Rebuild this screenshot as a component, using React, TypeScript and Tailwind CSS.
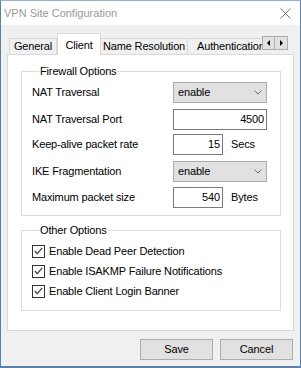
import { ReactNode } from 'react'

const FONT = { fontFamily: '"Liberation Sans", Arial, sans-serif' }

function Chevron() {
  return (
    <svg width="8" height="5" viewBox="0 0 8 5" className="mr-[4px]">
      <path d="M0.5 0.5 L4 4 L7.5 0.5" fill="none" stroke="#6e6e6e" strokeWidth="1" />
    </svg>
  )
}

function Select({ value }: { value: string }) {
  return (
    <div className="flex h-[21px] w-[94px] items-center justify-between border border-[#adadad] bg-[#e1e1e1] pl-[4px]">
      <span>{value}</span>
      <Chevron />
    </div>
  )
}

function Input({ value, width }: { value: string; width: string }) {
  return (
    <div className={`flex h-[21px] items-center justify-end border border-[#7a7a7a] bg-white pr-[2px] ${width}`}>
      {value}
    </div>
  )
}

function Row({ label, children, className = '' }: { label: string; children: ReactNode; className?: string }) {
  return (
    <div className={`flex items-center ${className}`}>
      <span className="w-[141px]">{label}</span>
      {children}
    </div>
  )
}

function Check({ label }: { label: string }) {
  return (
    <div className="flex h-[20px] items-center gap-[4px]">
      <div className="flex h-[13px] w-[13px] items-center justify-center border border-[#333] bg-white">
        <svg width="9" height="8" viewBox="0 0 9 8">
          <path d="M0.8 4 L3.3 6.6 L8.2 0.8" fill="none" stroke="#333" strokeWidth="1.1" />
        </svg>
      </div>
      <span>{label}</span>
    </div>
  )
}

export default function App() {
  return (
    <div
      className="flex h-[368px] w-[301px] flex-col border-x border-t border-b-2 border-x-[#5b7fa6] border-t-[#8fb0d0] border-b-[#5b7fa6] text-[11px] tracking-[-0.15px] text-black"
      style={FONT}
    >
      {/* Title bar */}
      <div className="flex h-[24px] shrink-0 items-center justify-between bg-white pl-[3px] pr-[9px]">
        <span className="text-[11px] tracking-normal text-[#999]">VPN Site Configuration</span>
        <svg width="11" height="11" viewBox="0 0 11 11">
          <path d="M0.5 0.5 L10.5 10.5 M10.5 0.5 L0.5 10.5" stroke="#777" strokeWidth="1" />
        </svg>
      </div>

      <div className="flex flex-1 flex-col bg-[#f0f0f0] px-[6px]">
        {/* Tabs */}
        <div className="flex h-[29px] shrink-0 items-end pl-[2px]">
          <div className="flex h-[16px] w-[48px] items-center justify-center border border-b-0 border-[#d9d9d9] bg-[#f0f0f0]">
            General
          </div>
          <div className="relative z-10 -mb-px flex h-[22px] w-[44px] items-start justify-center border border-b-0 border-[#d9d9d9] bg-white pt-[3px]">
            Client
          </div>
          <div className="flex h-[16px] w-[87px] items-center justify-center border border-b-0 border-l-0 border-[#d9d9d9] bg-[#f0f0f0]">
            Name Resolution
          </div>
          <div className="flex h-[16px] w-[74px] items-center overflow-hidden border-t border-[#d9d9d9] bg-[#f0f0f0] pl-[9px] whitespace-nowrap">
            Authentication
          </div>
          <div className="mb-[4px] flex self-end">
            <div className="flex h-[14px] w-[13px] items-center justify-center border border-[#adadad] bg-[#e1e1e1]">
              <svg width="4" height="6" viewBox="0 0 4 6">
                <path d="M3 0 L0 3 L3 6 Z" fill="#000" />
              </svg>
            </div>
            <div className="flex h-[14px] w-[13px] items-center justify-center border border-l-0 border-[#adadad] bg-[#e1e1e1]">
              <svg width="4" height="6" viewBox="0 0 4 6">
                <path d="M1 0 L4 3 L1 6 Z" fill="#000" />
              </svg>
            </div>
          </div>
        </div>

        {/* Panel */}
        <div className="flex h-[277px] shrink-0 flex-col border border-[#d9d9d9] bg-white pl-[13px] pr-[12px]">
          <fieldset className="mt-[10px] border border-[#dcdcdc] pb-[7px] pl-[10px]">
            <legend className="ml-[7px] px-[1px] leading-[13px]">Firewall Options</legend>
            <Row label="NAT Traversal" className="mt-[4px]">
              <Select value="enable" />
            </Row>
            <Row label="NAT Traversal Port" className="mt-[6px]">
              <Input value="4500" width="w-[94px]" />
            </Row>
            <Row label="Keep-alive packet rate" className="mt-[4px]">
              <Input value="15" width="w-[50px]" />
              <span className="ml-[8px]">Secs</span>
            </Row>
            <Row label="IKE Fragmentation" className="mt-[6px]">
              <Select value="enable" />
            </Row>
            <Row label="Maximum packet size" className="mt-[5px]">
              <Input value="540" width="w-[50px]" />
              <span className="ml-[8px]">Bytes</span>
            </Row>
          </fieldset>

          <fieldset className="mt-[8px] border border-[#dcdcdc] pb-[9px] pl-[10px] pt-[4px]">
            <legend className="ml-[7px] px-[1px] leading-[13px]">Other Options</legend>
            <Check label="Enable Dead Peer Detection" />
            <Check label="Enable ISAKMP Failure Notifications" />
            <Check label="Enable Client Login Banner" />
          </fieldset>
        </div>

        {/* Buttons */}
        <div className="mt-[8px] flex justify-end gap-[7px] pr-[1px]">
          <button className="h-[21px] w-[73px] border border-[#adadad] bg-[#e1e1e1]">Save</button>
          <button className="h-[21px] w-[73px] border border-[#adadad] bg-[#e1e1e1]">Cancel</button>
        </div>
      </div>
    </div>
  )
}
